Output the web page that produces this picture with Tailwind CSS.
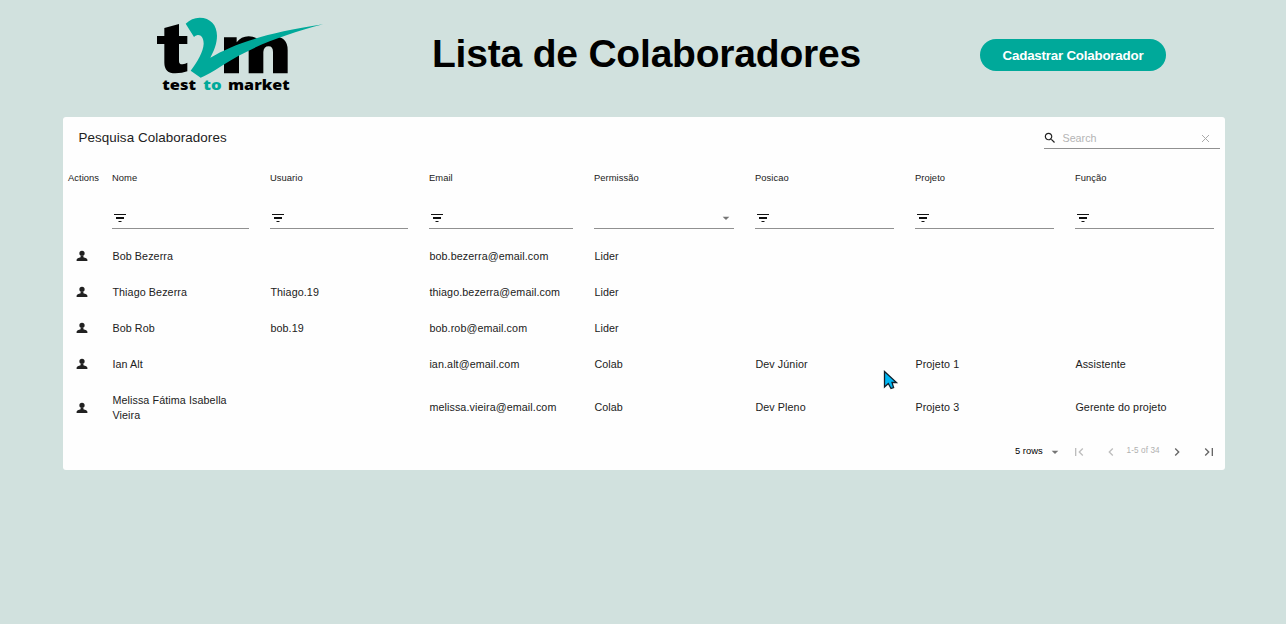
<!DOCTYPE html>
<html lang="pt-BR">
<head>
<meta charset="utf-8">
<title>Lista de Colaboradores</title>
<script src="https://cdn.jsdelivr.net/npm/@tailwindcss/browser@4"></script>
</head>
<body class="relative h-[624px] overflow-hidden bg-[#d1e1de] font-['Liberation_Sans',Arial,sans-serif] text-[#212121]">
<svg class="hidden">
  <symbol id="filter" viewBox="0 0 16 16"><path d="M2 4h12v1H2zM4 7h8v2H4zM6.500 11h3v1h-3z"/></symbol>
  <symbol id="person" viewBox="0 0 16 16"><path d="M8 2.700a2.650 2.650 0 1 1 0 5.300 2.650 2.650 0 0 1 0-5.300zM6.600 8h2.800v1.300C11.500 9.700 13.400 10.600 13.400 11.800V13H2.600v-1.200C2.600 10.600 4.500 9.700 6.600 9.300z"/></symbol>
  <symbol id="drop" viewBox="0 0 24 24"><path d="M7 10l5 5 5-5z"/></symbol>
  <symbol id="left" viewBox="0 0 24 24"><path d="M15.410 7.410L14 6l-6 6 6 6 1.410-1.410L10.830 12z"/></symbol>
  <symbol id="right" viewBox="0 0 24 24"><path d="M10 6L8.590 7.410 13.170 12l-4.580 4.590L10 18l6-6z"/></symbol>
  <symbol id="first" viewBox="0 0 24 24"><path d="M18.410 16.590L13.820 12l4.590-4.590L17 6l-6 6 6 6zM6 6h2v12H6z"/></symbol>
  <symbol id="last" viewBox="0 0 24 24"><path d="M5.590 7.410L10.180 12l-4.590 4.590L7 18l6-6-6-6zM16 6h2v12h-2z"/></symbol>
</svg>

<header class="flex h-[117px] items-start pl-[150px]">
  <svg class="mt-[10px] h-[90px] w-[180px] shrink-0" viewBox="0 0 540 270">
    <path d="M43 54 87 42V78H112V102H87V153Q87 164 98 163Q106 162 112 158V184Q97 190 76 190Q43 190 43 158V102H21V78H43Z"/>
    <path d="M222 82H260V97Q273 79 296 79Q322 79 329 98Q342 79 370 79Q413 80 413 120V190H369V126Q369 109 356 109Q341 109 340 126V190H296V126Q296 109 283 109Q267 109 267 126V190H222Z"/>
    <path d="M107 41Q125 23 149 23C181 23 201 45 201 77C201 102 191 124 181 143C248 104 331 72 519 43C399 75 300 112 218 166Q176 194 152 203L122 182C143 154 160 125 161 101C161 83 153 74 143 75Q136 76 132 81Z" fill="#00a99a"/>
    <g font-family="Open Sans" font-weight="800" font-size="40">
      <text x="37" y="240" textLength="101" lengthAdjust="spacingAndGlyphs">test</text>
      <text x="160" y="240" textLength="55" lengthAdjust="spacingAndGlyphs" fill="#00a99a">to</text>
      <text x="234" y="240" textLength="185" lengthAdjust="spacingAndGlyphs">market</text>
    </g>
  </svg>
  <h1 class="mt-[30px] ml-[102px] w-[548px] shrink-0 text-[39px] leading-[48px] font-bold tracking-[-0.2px] whitespace-nowrap text-black">Lista de Colaboradores</h1>
  <button class="mt-[39px] h-8 w-[186px] shrink-0 rounded-full bg-[#00a99a] pt-px text-[13.33px] font-bold tracking-[-0.21px] text-white">Cadastrar Colaborador</button>
</header>

<main class="ml-[63px] h-[353px] w-[1162px] rounded-[3px] bg-[#fefefe]">
  <div class="flex h-[43px] justify-between pr-[5px] pl-[15.500px]">
    <h2 class="mt-[11px] text-[13.4px] leading-5 tracking-[0.07px]">Pesquisa Colaboradores</h2>
    <div class="mt-3 flex h-5 w-44 items-center border-b border-[#909090]">
      <svg class="mb-0.5 -ml-px h-[14px] w-[14px]" viewBox="0 0 24 24" fill="#212121"><path d="M15.500 14h-.79l-.28-.27C15.410 12.590 16 11.110 16 9.500 16 5.910 13.090 3 9.500 3S3 5.910 3 9.500 5.910 16 9.500 16c1.610 0 3.090-.59 4.230-1.570l.27.28v.79l5 4.990L20.490 19l-4.990-5zm-6 0C7.010 14 5 11.990 5 9.500S7.010 5 9.500 5 14 7.010 14 9.500 11.990 14 9.500 14z"/></svg>
      <span class="ml-[5.500px] grow text-[10.72px] text-[#b4b4b4]">Search</span>
      <svg class="mr-[10px] mb-px h-[9px] w-[9px]" viewBox="0 0 9 9" fill="none" stroke="#aaa"><path d="m1 1 7 7M8 1 1 8"/></svg>
    </div>
  </div>
  <div id="head" class="grid h-[35px] grid-cols-[44px_158px_159px_165px_161px_160px_160px_139px] items-center pt-0.5 pl-[5px] text-[9.38px] tracking-[0.05px]"></div>
  <div id="filters" class="grid h-[43px] grid-cols-[44px_158px_159px_165px_161px_160px_160px_139px] pl-[5px]"></div>
  <div id="rows" class="text-[10.72px] leading-[15px] tracking-[0.1px]"></div>
  <footer class="flex h-9 items-center pl-[952px] text-[9.38px]">
    <span class="w-[31.500px] shrink-0 text-black">5 rows</span>
    <svg class="mt-px h-4 w-4 shrink-0" fill="#757575"><use href="#drop"/></svg>
    <svg class="mt-px ml-2 h-4 w-4 shrink-0" fill="#bdbdbd"><use href="#first"/></svg>
    <svg class="mt-px ml-4 h-4 w-4 shrink-0" fill="#bdbdbd"><use href="#left"/></svg>
    <span class="ml-2 w-[34px] shrink-0 pt-px text-[8.2px] tracking-[0.1px] whitespace-nowrap text-[#b0b0b0]">1-5 of 34</span>
    <svg class="mt-px ml-2 h-4 w-4 shrink-0" fill="#666"><use href="#right"/></svg>
    <svg class="mt-px ml-4 h-4 w-4 shrink-0" fill="#666"><use href="#last"/></svg>
  </footer>
</main>

<svg class="absolute top-[370px] left-[883px] h-[21px] w-4" viewBox="0 0 16 21"><path d="M1.500 1.500V17L5.300 13.500 8 18.500 10.600 17.500 9 12.500H13.500Z" fill="#00b7f4" stroke="#10202c" stroke-width="1.300"/></svg>

<script>
const names = ['Actions', 'Nome', 'Usuario', 'Email', 'Permissão', 'Posicao', 'Projeto', 'Função'];
document.getElementById('head').innerHTML = names.map(n => `<span>${n}</span>`).join('');
document.getElementById('filters').innerHTML = names.map((n, i) => {
  if (i === 0) return '<span></span>';
  const edge = i === 7 ? '' : 'mr-[21px]';
  const icon = i === 4
    ? '<svg class="ml-auto mt-[15px] h-4 w-4" fill="#757575"><use href="#drop"/></svg>'
    : '<svg class="mt-[15px] h-4 w-4" fill="#111"><use href="#filter"/></svg>';
  return `<div class="flex h-[34px] border-b border-[#909090] ${edge}">${icon}</div>`;
}).join('');
const data = [
  ['Bob Bezerra', '', 'bob.bezerra@email.com', 'Lider', '', '', ''],
  ['Thiago Bezerra', 'Thiago.19', 'thiago.bezerra@email.com', 'Lider', '', '', ''],
  ['Bob Rob', 'bob.19', 'bob.rob@email.com', 'Lider', '', '', ''],
  ['Ian Alt', '', 'ian.alt@email.com', 'Colab', 'Dev Júnior', 'Projeto 1', 'Assistente'],
  ['Melissa Fátima Isabella Vieira', '', 'melissa.vieira@email.com', 'Colab', 'Dev Pleno', 'Projeto 3', 'Gerente do projeto'],
];
document.getElementById('rows').innerHTML = data.map((r, i) =>
  `<div class="grid grid-cols-[44px_158px_159px_165px_161px_160px_160px_139px] items-center pl-[5px] ${i === 4 ? 'h-[51px]' : 'h-9'}">
    <svg class="ml-[6px] h-4 w-4" fill="#212121"><use href="#person"/></svg>
    ${r.map(t => `<span class="pr-[21px] pl-[0.400px]">${t}</span>`).join('')}
  </div>`).join('');
</script>
</body>
</html>
